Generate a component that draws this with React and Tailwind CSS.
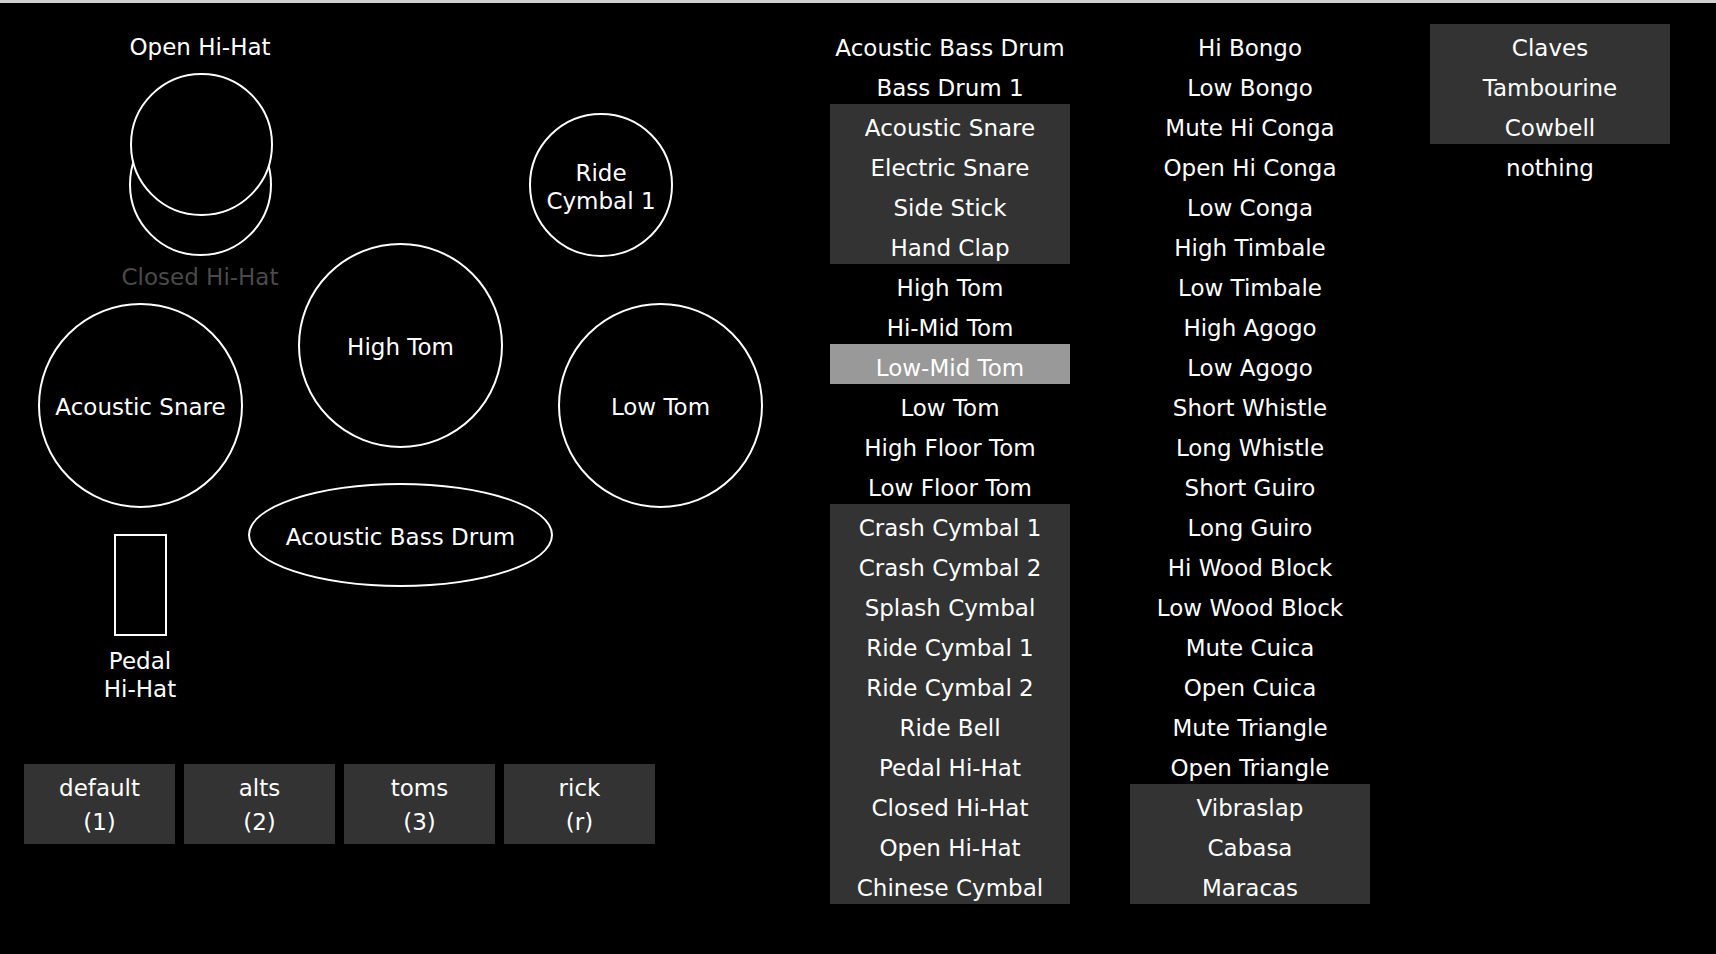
import React from "react";

const col1 = [
  ["Acoustic Bass Drum", ""],
  ["Bass Drum 1", ""],
  ["Acoustic Snare", "d"],
  ["Electric Snare", "d"],
  ["Side Stick", "d"],
  ["Hand Clap", "d"],
  ["High Tom", ""],
  ["Hi-Mid Tom", ""],
  ["Low-Mid Tom", "l"],
  ["Low Tom", ""],
  ["High Floor Tom", ""],
  ["Low Floor Tom", ""],
  ["Crash Cymbal 1", "d"],
  ["Crash Cymbal 2", "d"],
  ["Splash Cymbal", "d"],
  ["Ride Cymbal 1", "d"],
  ["Ride Cymbal 2", "d"],
  ["Ride Bell", "d"],
  ["Pedal Hi-Hat", "d"],
  ["Closed Hi-Hat", "d"],
  ["Open Hi-Hat", "d"],
  ["Chinese Cymbal", "d"],
];

const col2 = [
  ["Hi Bongo", ""],
  ["Low Bongo", ""],
  ["Mute Hi Conga", ""],
  ["Open Hi Conga", ""],
  ["Low Conga", ""],
  ["High Timbale", ""],
  ["Low Timbale", ""],
  ["High Agogo", ""],
  ["Low Agogo", ""],
  ["Short Whistle", ""],
  ["Long Whistle", ""],
  ["Short Guiro", ""],
  ["Long Guiro", ""],
  ["Hi Wood Block", ""],
  ["Low Wood Block", ""],
  ["Mute Cuica", ""],
  ["Open Cuica", ""],
  ["Mute Triangle", ""],
  ["Open Triangle", ""],
  ["Vibraslap", "d"],
  ["Cabasa", "d"],
  ["Maracas", "d"],
];

const col3 = [
  ["Claves", "d"],
  ["Tambourine", "d"],
  ["Cowbell", "d"],
  ["nothing", ""],
];

function Row({ label, kind }) {
  const bg =
    kind === "d" ? "bg-[#333333]" : kind === "l" ? "bg-[#999999]" : "bg-transparent";
  return (
    <div className={`h-10 flex items-center justify-center pt-[8px] whitespace-nowrap ${bg}`}>
      {label}
    </div>
  );
}

function Column({ items }) {
  return (
    <div className="w-[240px] flex flex-col">
      {items.map(([label, kind]) => (
        <Row key={label} label={label} kind={kind} />
      ))}
    </div>
  );
}

function Btn({ top, bottom }) {
  return (
    <div className="w-[151px] h-[80px] bg-[#333333] flex flex-col items-center justify-center leading-[34px] pt-[1px]">
      <span>{top}</span>
      <span>{bottom}</span>
    </div>
  );
}

export default function App() {
  return (
    <div className="w-[1716px] h-[954px] bg-black text-white overflow-hidden font-['DejaVu_Sans',sans-serif] text-[23px]">
      <div className="h-[3px] bg-[#cfcfcf]" />
      <div className="flex">
        {/* Drum kit panel */}
        <div className="w-[830px] flex flex-col">
          <div className="relative h-[761px]">
            <div className="absolute left-[100px] top-[30px] w-[200px] text-center leading-[28px]">
              Open Hi-Hat
            </div>
            <div className="absolute left-[129px] top-[110px] w-[143px] h-[143px] rounded-full border-2 border-white" />
            <div className="absolute left-[130px] top-[70px] w-[143px] h-[143px] rounded-full border-2 border-white bg-black" />
            <div className="absolute left-[100px] top-[260px] w-[200px] text-center leading-[28px] text-[#4a4a4a]">
              Closed Hi-Hat
            </div>
            <div className="absolute left-[529px] top-[110px] w-[144px] h-[144px] rounded-full border-2 border-white flex flex-col items-center justify-center text-center leading-[28px] pt-[4px]">
              <span>Ride</span>
              <span>Cymbal 1</span>
            </div>
            <div className="absolute left-[298px] top-[240px] w-[205px] h-[205px] rounded-full border-2 border-white flex items-center justify-center pt-[4px]">
              High Tom
            </div>
            <div className="absolute left-[38px] top-[300px] w-[205px] h-[205px] rounded-full border-2 border-white flex items-center justify-center pt-[4px] whitespace-nowrap">
              Acoustic Snare
            </div>
            <div className="absolute left-[558px] top-[300px] w-[205px] h-[205px] rounded-full border-2 border-white flex items-center justify-center pt-[4px]">
              Low Tom
            </div>
            <div className="absolute left-[248px] top-[480px] w-[305px] h-[104px] rounded-[50%] border-2 border-white flex items-center justify-center pt-[4px] whitespace-nowrap">
              Acoustic Bass Drum
            </div>
            <div className="absolute left-[114px] top-[531px] w-[53px] h-[102px] border-2 border-white" />
            <div className="absolute left-[40px] top-[644px] w-[200px] text-center leading-[28px]">
              Pedal
              <br />
              Hi-Hat
            </div>
          </div>
          <div className="flex gap-[9px] pl-[24px]">
            <Btn top="default" bottom="(1)" />
            <Btn top="alts" bottom="(2)" />
            <Btn top="toms" bottom="(3)" />
            <Btn top="rick" bottom="(r)" />
          </div>
        </div>
        {/* Instrument lists */}
        <div className="flex gap-[60px] pt-[21px]">
          <Column items={col1} />
          <Column items={col2} />
          <Column items={col3} />
        </div>
      </div>
    </div>
  );
}
